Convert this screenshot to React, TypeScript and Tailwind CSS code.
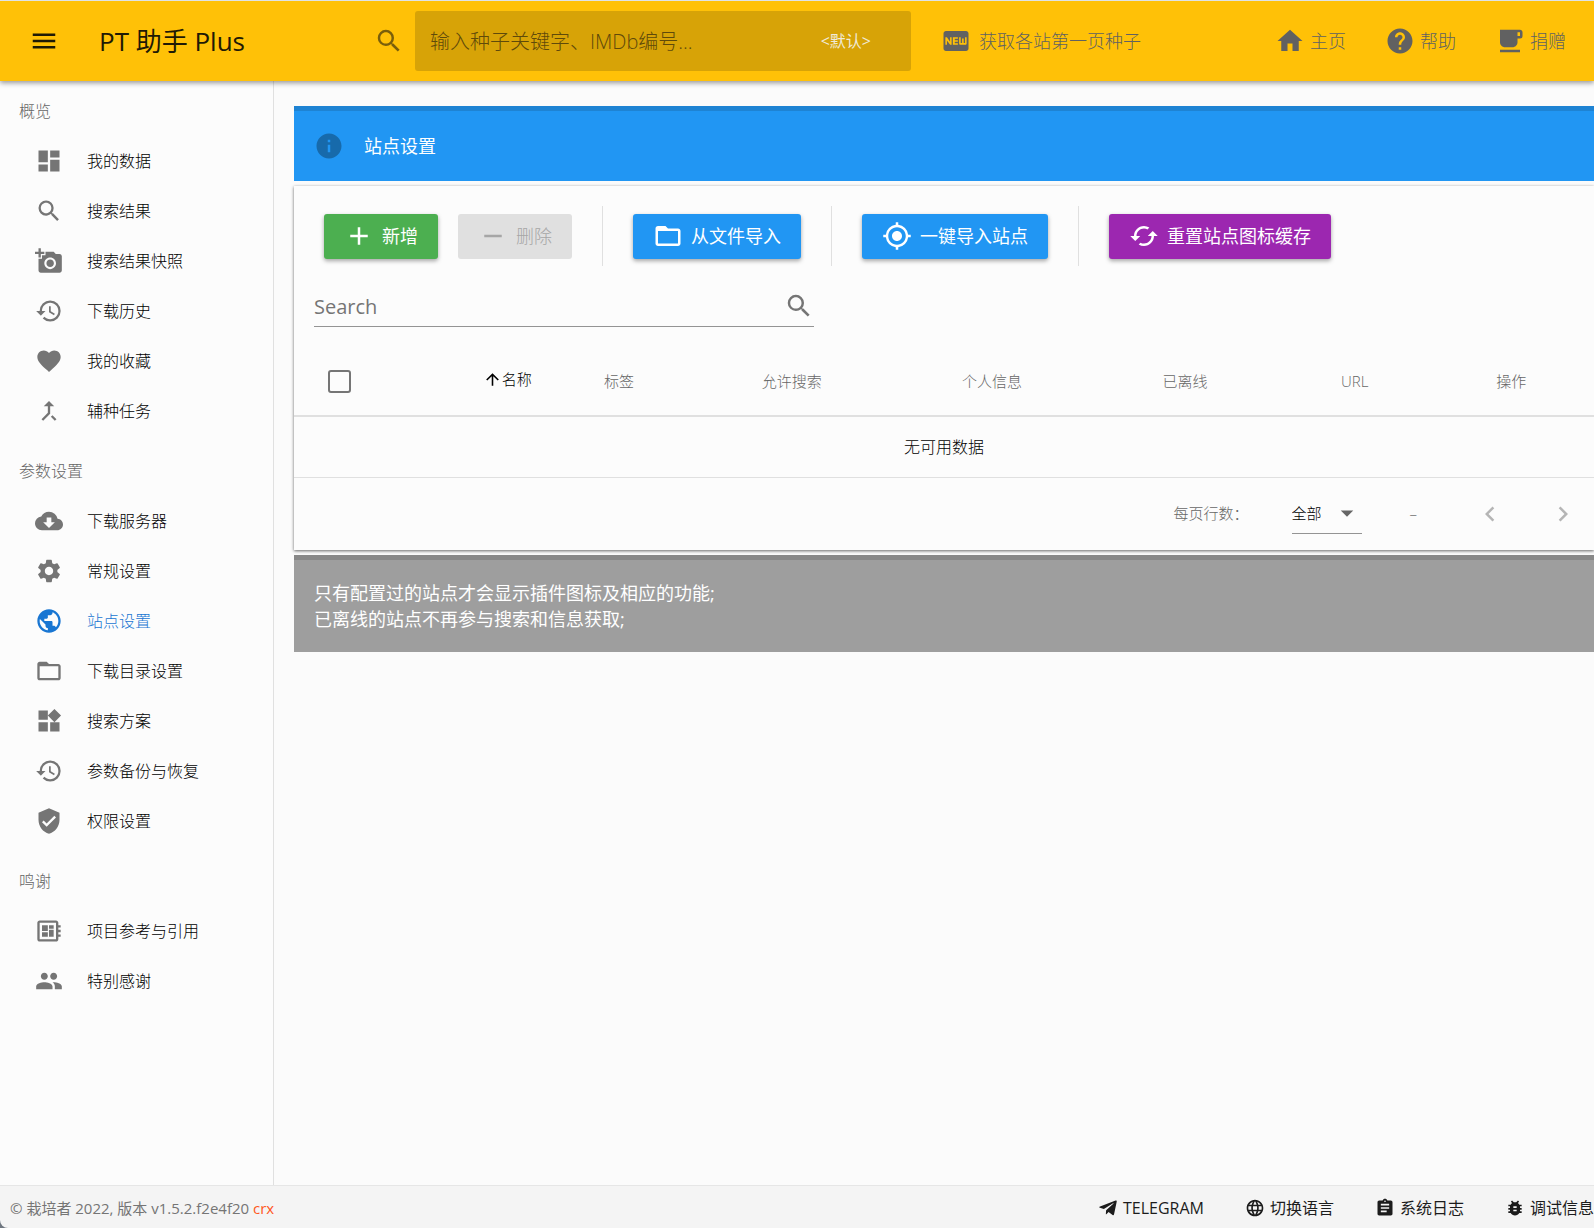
import type { ReactNode } from "react";
import type { IconType } from "react-icons";
import { FaTelegramPlane } from "react-icons/fa";
import {
  MdAdd,
  MdAddAPhoto,
  MdArrowDropDown,
  MdArrowUpward,
  MdAssignment,
  MdBugReport,
  MdCached,
  MdCallMerge,
  MdChevronLeft,
  MdChevronRight,
  MdCloudDownload,
  MdDashboard,
  MdDeveloperBoard,
  MdFavorite,
  MdFiberNew,
  MdFolderOpen,
  MdGpsFixed,
  MdHelp,
  MdHistory,
  MdHome,
  MdInfo,
  MdLanguage,
  MdLocalCafe,
  MdMenu,
  MdPeople,
  MdPublic,
  MdRemove,
  MdSearch,
  MdSettings,
  MdVerifiedUser,
  MdWidgets,
} from "react-icons/md";
import clsx from "clsx";

type NavItem = { label: string; icon: IconType; active?: boolean };

const navGroups: { title: string; items: NavItem[] }[] = [
  {
    title: "概览",
    items: [
      { label: "我的数据", icon: MdDashboard },
      { label: "搜索结果", icon: MdSearch },
      { label: "搜索结果快照", icon: MdAddAPhoto },
      { label: "下载历史", icon: MdHistory },
      { label: "我的收藏", icon: MdFavorite },
      { label: "辅种任务", icon: MdCallMerge },
    ],
  },
  {
    title: "参数设置",
    items: [
      { label: "下载服务器", icon: MdCloudDownload },
      { label: "常规设置", icon: MdSettings },
      { label: "站点设置", icon: MdPublic, active: true },
      { label: "下载目录设置", icon: MdFolderOpen },
      { label: "搜索方案", icon: MdWidgets },
      { label: "参数备份与恢复", icon: MdHistory },
      { label: "权限设置", icon: MdVerifiedUser },
    ],
  },
  {
    title: "鸣谢",
    items: [
      { label: "项目参考与引用", icon: MdDeveloperBoard },
      { label: "特别感谢", icon: MdPeople },
    ],
  },
];

const topLinks: NavItem[] = [
  { label: "主页", icon: MdHome },
  { label: "帮助", icon: MdHelp },
  { label: "捐赠", icon: MdLocalCafe },
];

const columns = [
  { label: "标签", width: "w-[9.2%]" },
  { label: "允许搜索", width: "w-[17.4%]" },
  { label: "个人信息", width: "w-[13.4%]" },
  { label: "已离线", width: "w-[16.3%]" },
  { label: "URL", width: "w-[9.8%]" },
  { label: "操作", width: "w-[13.5%] pl-2.5" },
];

const footerLinks: NavItem[] = [
  { label: "TELEGRAM", icon: FaTelegramPlane },
  { label: "切换语言", icon: MdLanguage },
  { label: "系统日志", icon: MdAssignment },
  { label: "调试信息", icon: MdBugReport },
];

function Header() {
  return (
    <header className="relative z-10 flex h-[81px] shrink-0 items-center border-t border-[#dfe3e6] bg-[#ffc107] text-[#616161] shadow-[0_2px_5px_rgba(0,0,0,0.4)]">
      <div className="flex w-[374px] shrink-0 items-center gap-10 pl-[29px] text-[#1f1a05]">
        <button aria-label="菜单">
          <MdMenu size={30} />
        </button>
        <h1 className="text-[26px] whitespace-nowrap">PT 助手 Plus</h1>
      </div>
      <MdSearch size={30} className="shrink-0 text-[#7a5f0b]" />
      <div className="ml-[11px] flex h-[60px] w-[496px] items-center rounded-[3px] bg-[#d7a307] pr-10 pl-[15px]">
        <input
          type="text"
          aria-label="搜索种子"
          placeholder="输入种子关键字、IMDb编号..."
          className="min-w-0 flex-1 bg-transparent pt-0.5 text-xl font-light text-[#5f4a0a] outline-none placeholder:text-[#5f4a0a]"
        />
        <button className="text-base whitespace-nowrap text-[#f0ead8]">&lt;默认&gt;</button>
      </div>
      <button className="ml-[30px] flex items-center gap-2 text-lg font-light whitespace-nowrap">
        <MdFiberNew size={30} />
        获取各站第一页种子
      </button>
      <nav className="ml-auto flex gap-[39px] pr-7">
        {topLinks.map(({ label, icon: Icon }) => (
          <a key={label} href="#" className="flex items-center gap-[5px] text-lg font-light whitespace-nowrap">
            <Icon size={30} />
            {label}
          </a>
        ))}
      </nav>
    </header>
  );
}

function Sidebar() {
  return (
    <aside className="w-[274px] shrink-0 border-r border-[#e0e0e0] bg-[#fcfcfc]">
      {navGroups.map((group) => (
        <section key={group.title} className="py-[5px]">
          <h2 className="flex h-[50px] items-center pl-[19px] text-base font-light text-[#666666]">{group.title}</h2>
          <ul>
            {group.items.map(({ label, icon: Icon, active }) => (
              <li key={label}>
                <a
                  href="#"
                  className={clsx(
                    "flex h-[50px] items-center gap-6 pl-[35px] text-base font-light",
                    active ? "text-[#1976d2]" : "text-black"
                  )}
                >
                  <Icon size={28} className={active ? "text-[#1976d2]" : "text-[#757575]"} />
                  {label}
                </a>
              </li>
            ))}
          </ul>
        </section>
      ))}
    </aside>
  );
}

type ToolButtonProps = {
  icon: IconType;
  color: string;
  disabled?: boolean;
  children: ReactNode;
};

function ToolButton({ icon: Icon, color, disabled, children }: ToolButtonProps) {
  return (
    <button
      disabled={disabled}
      className={clsx(
        "flex h-[45px] items-center gap-2 rounded-[3px] px-5 text-lg whitespace-nowrap",
        color,
        disabled ? "font-light text-[#a6a6a6]" : "text-white shadow-[0_2px_4px_rgba(0,0,0,0.35)]"
      )}
    >
      <Icon size={30} />
      {children}
    </button>
  );
}

function Divider() {
  return <div className="mx-[30px] h-[60px] w-px bg-[#e0e0e0]" />;
}

function SiteTable() {
  return (
    <table className="w-full table-fixed text-center">
      <thead>
        <tr className="h-[73px] border-b-2 border-[#e0e0e0] text-[15px] text-[#666666]">
          <th className="w-[12.4%] pt-1 pl-[34px] text-left">
            <input
              type="checkbox"
              aria-label="全选"
              className="block size-[23px] appearance-none rounded-[3px] border-2 border-[#757575]"
            />
          </th>
          <th className="w-[8%] pt-1 font-light text-black">
            <button className="inline-flex items-center">
              <MdArrowUpward size={19} />
              名称
            </button>
          </th>
          {columns.map((col) => (
            <th key={col.label} className={clsx("pt-1 font-light", col.width)}>
              {col.label}
            </th>
          ))}
        </tr>
      </thead>
      <tbody>
        <tr className="h-[61px] border-b border-[#e0e0e0]">
          <td colSpan={8} className="text-base font-light text-black">
            无可用数据
          </td>
        </tr>
      </tbody>
    </table>
  );
}

function Pagination() {
  return (
    <div className="flex h-[72px] items-center justify-end pr-[9px] text-[15px] font-light text-[#666666]">
      <label htmlFor="page-size">每页行数：</label>
      <div className="relative ml-[43px] border-b border-[#949494]">
        <select
          id="page-size"
          defaultValue="all"
          className="block h-10 w-[70px] appearance-none bg-transparent text-black outline-none"
        >
          <option value="all">全部</option>
        </select>
        <MdArrowDropDown size={30} className="pointer-events-none absolute top-[5px] right-0" />
      </div>
      <span className="mr-[50px] ml-12">–</span>
      <button disabled aria-label="上一页" className="flex size-[45px] items-center justify-center text-[#b5b5b5]">
        <MdChevronLeft size={30} />
      </button>
      <button disabled aria-label="下一页" className="ml-7 flex size-[45px] items-center justify-center text-[#b5b5b5]">
        <MdChevronRight size={30} />
      </button>
    </div>
  );
}

function Main() {
  return (
    <main className="min-w-0 flex-1 bg-[#fbfbfb] pt-[25px] pl-5">
      <div className="flex h-[75px] items-center gap-5 border-t-[5px] border-[#1e83d3] bg-[#2196f3] pl-5 text-lg text-white">
        <MdInfo size={30} className="text-[#176aab]" />
        站点设置
      </div>
      <section className="mt-[5px] bg-[#fcfcfc] shadow-[0_1px_3px_rgba(0,0,0,0.6)]">
        <div className="flex items-center pt-5 pl-[30px]">
          <div className="flex gap-5">
            <ToolButton icon={MdAdd} color="bg-[#4caf50]">新增</ToolButton>
            <ToolButton icon={MdRemove} color="bg-[#e0e0e0]" disabled>删除</ToolButton>
          </div>
          <Divider />
          <ToolButton icon={MdFolderOpen} color="bg-[#2196f3]">从文件导入</ToolButton>
          <Divider />
          <ToolButton icon={MdGpsFixed} color="bg-[#2196f3]">一键导入站点</ToolButton>
          <Divider />
          <ToolButton icon={MdCached} color="bg-[#9c27b0]">重置站点图标缓存</ToolButton>
        </div>
        <div className="mt-5 mb-4 ml-5 flex h-[41px] w-[500px] items-center border-b border-[#949494] text-[#757575]">
          <input
            type="text"
            aria-label="Search"
            placeholder="Search"
            className="min-w-0 flex-1 bg-transparent pt-0.5 text-xl outline-none placeholder:text-[#757575]"
          />
          <MdSearch size={30} />
        </div>
        <SiteTable />
        <Pagination />
      </section>
      <div className="mt-[5px] border-t-[5px] border-[#888888] bg-[#9e9e9e] p-5 text-lg leading-[26px] text-white">
        <p>只有配置过的站点才会显示插件图标及相应的功能;</p>
        <p>已离线的站点不再参与搜索和信息获取;</p>
      </div>
    </main>
  );
}

function Footer() {
  return (
    <footer className="flex h-[43px] shrink-0 items-center justify-between overflow-hidden rounded-bl-lg border-t border-[#e6e6e6] bg-[#f4f4f4] pt-0.5 pl-2.5 whitespace-nowrap">
      <p className="text-[15px] text-[#757575]">
        © 栽培者 2022, 版本 v1.5.2.f2e4f20 <a href="#" className="text-[#ff5722]">crx</a>
      </p>
      <div className="flex gap-[41px] text-base text-[#1c1c1c]">
        {footerLinks.map(({ label, icon: Icon }) => (
          <a key={label} href="#" className="flex items-center gap-[5px]">
            <Icon size={20} />
            {label}
          </a>
        ))}
      </div>
    </footer>
  );
}

export default function App() {
  return (
    <div className="flex min-h-screen flex-col overflow-x-hidden bg-[#6f7780] font-['Open_Sans','Noto_Sans_CJK_SC',sans-serif]">
      <Header />
      <div className="flex flex-1">
        <Sidebar />
        <Main />
      </div>
      <Footer />
    </div>
  );
}
